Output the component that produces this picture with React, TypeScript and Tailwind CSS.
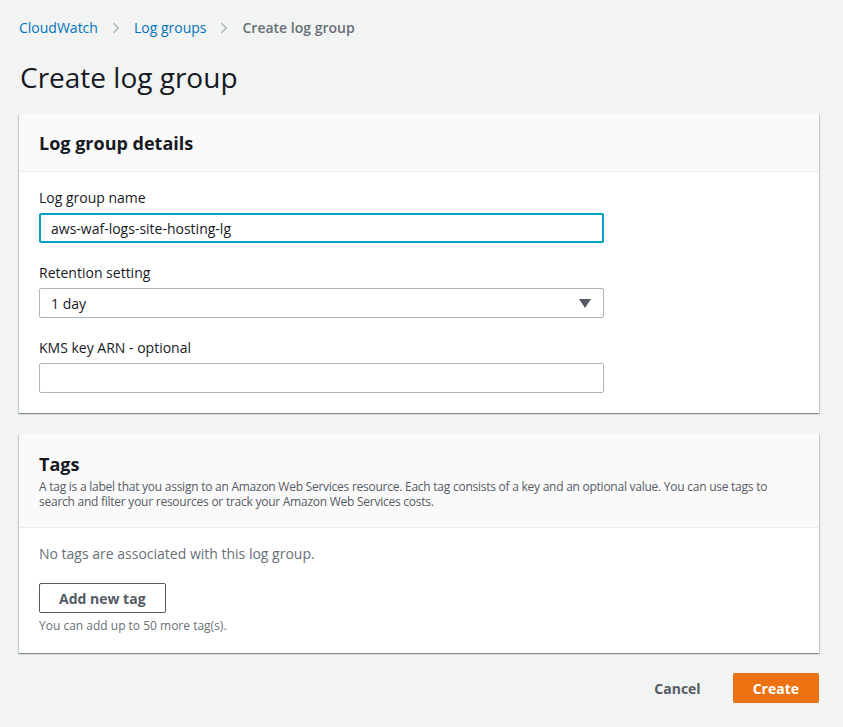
import { ChevronRight } from 'lucide-react';

const font = { fontFamily: '"Open Sans", "Liberation Sans", sans-serif' };

const Field = ({ label, children }: { label: string; children: React.ReactNode }) => (
  <div className="flex flex-col">
    <label className="text-[14px] leading-[22px] text-[#16191f] mb-[4px]">{label}</label>
    {children}
  </div>
);

export default function App() {
  return (
    <div className="min-h-[727px] bg-[#f2f3f3] pl-[19px] pr-[24px] pt-[17px] pb-6 text-[#16191f]" style={font}>
      {/* breadcrumbs */}
      <nav className="flex items-center text-[14px] leading-[22px]">
        <a className="text-[#0073bb]">CloudWatch</a>
        <ChevronRight className="w-[18px] h-[18px] text-[#aab7b8] mx-[9px]" strokeWidth={2} />
        <a className="text-[#0073bb]">Log groups</a>
        <ChevronRight className="w-[18px] h-[18px] text-[#aab7b8] mx-[9px]" strokeWidth={2} />
        <span className="font-semibold text-[#687078]">Create log group</span>
      </nav>

      <h1 className="text-[28px] leading-[36px] mt-[20px] mb-[19px] pl-[1px] font-normal">Create log group</h1>

      {/* details card */}
      <section className="bg-white shadow-[0_1px_1px_0_rgba(0,28,36,0.3),1px_1px_1px_0_rgba(0,28,36,0.15),-1px_1px_1px_0_rgba(0,28,36,0.15)]">
        <div className="bg-[#fafafa] border-b border-[#eaeded] px-[20px] h-[58px] flex items-center">
          <h2 className="text-[18px] font-bold leading-[22px]">Log group details</h2>
        </div>
        <div className="px-[20px] pt-[15px] pb-[20px] flex flex-col gap-[19px]">
          <Field label="Log group name">
            <div className="w-[565px] h-[30px] border-2 border-[#00a1c9] rounded-[2px] flex items-center px-[10px] text-[14px]">
              aws-waf-logs-site-hosting-lg
            </div>
          </Field>
          <Field label="Retention setting">
            <div className="w-[565px] h-[30px] border border-[#aab7b8] rounded-[2px] flex items-center justify-between px-[11px] text-[14px]">
              <span>1 day</span>
              <svg width="12" height="9" viewBox="0 0 12 9" className="mr-[1px]">
                <path d="M0 0h12L6 9z" fill="#545b64" />
              </svg>
            </div>
          </Field>
          <Field label="KMS key ARN - optional">
            <div className="w-[565px] h-[30px] border border-[#aab7b8] rounded-[2px]" />
          </Field>
        </div>
      </section>

      {/* tags card */}
      <section className="mt-[21px] bg-white shadow-[0_1px_1px_0_rgba(0,28,36,0.3),1px_1px_1px_0_rgba(0,28,36,0.15),-1px_1px_1px_0_rgba(0,28,36,0.15)]">
        <div className="bg-[#fafafa] border-b border-[#eaeded] px-[20px] pt-[18px] pb-[18px]">
          <h2 className="text-[18px] font-bold leading-[24px]">Tags</h2>
          <p className="mt-[3px] text-[12px] leading-[15px] text-[#545b64] tracking-[-0.25px]">
            A tag is a label that you assign to an Amazon Web Services resource. Each tag consists of a key and an optional value. You can use tags to search and filter your resources or track your Amazon Web Services costs.
          </p>
        </div>
        <div className="px-[20px] pt-[15px] pb-[19px]">
          <p className="text-[14px] leading-[22px] text-[#687078]">No tags are associated with this log group.</p>
          <button className="mt-[18px] h-[30px] px-[19px] border border-[#545b64] rounded-[2px] text-[14px] font-bold text-[#545b64] bg-white">
            Add new tag
          </button>
          <p className="text-[12px] leading-[16px] text-[#687078] mt-[5px]">You can add up to 50 more tag(s).</p>
        </div>
      </section>

      {/* footer */}
      <div className="flex justify-end items-center mt-[20px] gap-[12px]">
        <button className="h-[30px] px-[20px] text-[14px] font-bold text-[#545b64]">Cancel</button>
        <button className="h-[30px] px-[20px] rounded-[2px] bg-[#ec7211] text-white text-[14px] font-bold">Create</button>
      </div>
    </div>
  );
}
